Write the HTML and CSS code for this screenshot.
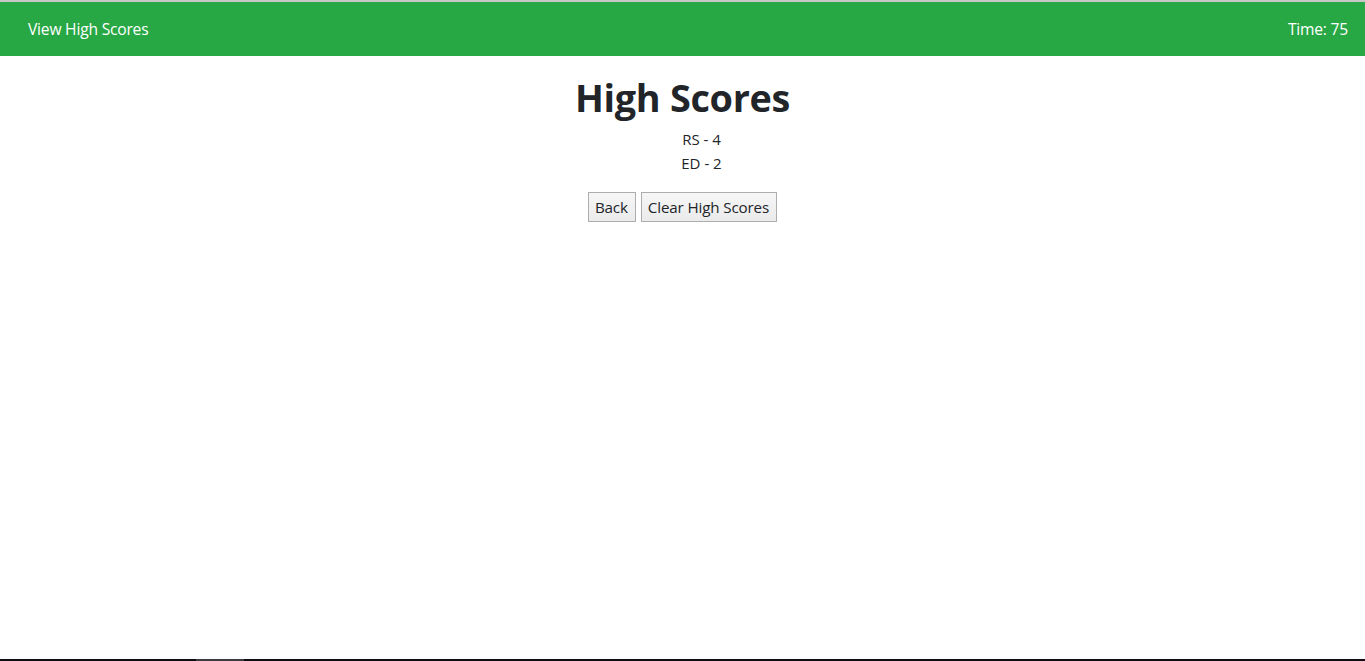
FILE: index.html
```html
<!DOCTYPE html>
<html lang="en">
<head>
<meta charset="utf-8">
<title>High Scores</title>
<link rel="stylesheet" href="styles.css">
</head>
<body>
<div class="page">
  <nav class="navbar">
    <a class="nav-link" href="#">View High Scores</a>
    <span class="timer">Time: 75</span>
  </nav>
  <main class="content">
    <h1 class="title">High Scores</h1>
    <ol class="scores">
      <li>RS - 4</li>
      <li>ED - 2</li>
    </ol>
    <div class="actions">
      <button class="btn" type="button">Back</button>
      <button class="btn" type="button">Clear High Scores</button>
    </div>
  </main>
  <div class="edge"><span class="edge-mark"></span></div>
</div>
</body>
</html>
```

FILE: styles.css
```css
* { box-sizing: border-box; }
html, body { margin: 0; padding: 0; }
body {
  font-family: "Open Sans", "Noto Sans", sans-serif;
  color: #212529;
  background: #fff;
  font-size: 16px;
  line-height: 24px;
}
.page {
  min-height: 100vh;
  display: flex;
  flex-direction: column;
  border-top: 2px solid #c8c8c8;
}
.navbar {
  background: #28a745;
  height: 54px;
  display: flex;
  align-items: center;
  justify-content: space-between;
  padding: 0 17px 0 28px;
}
.nav-link, .timer {
  color: #fff;
  text-decoration: none;
  font-size: 15.6px;
  letter-spacing: -0.2px;
}
.content {
  flex: 1;
  display: flex;
  flex-direction: column;
  align-items: center;
}
.title {
  margin: 18px 0 0;
  font-size: 37.8px;
  line-height: 48px;
  font-weight: 700;
  letter-spacing: -0.3px;
}
.scores {
  list-style: none;
  margin: 5px 0 0;
  padding: 0 0 0 38px;
  text-align: center;
  font-size: 15px;
  line-height: 24px;
}
.actions {
  display: flex;
  gap: 5px;
  margin-top: 17px;
}
.btn {
  font-family: inherit;
  font-size: 15.2px;
  color: #212529;
  height: 30px;
  padding: 0 7px 0 6px;
  background: linear-gradient(#f6f6f6, #ebebeb);
  border: 1px solid #adadad;
  border-radius: 0;
  letter-spacing: -0.15px;
}
.edge {
  height: 2px;
  background: #110c14;
  position: relative;
}
.edge-mark {
  position: absolute;
  left: 196px;
  top: 0;
  width: 48px;
  height: 2px;
  background: #3c3a40;
}
```
